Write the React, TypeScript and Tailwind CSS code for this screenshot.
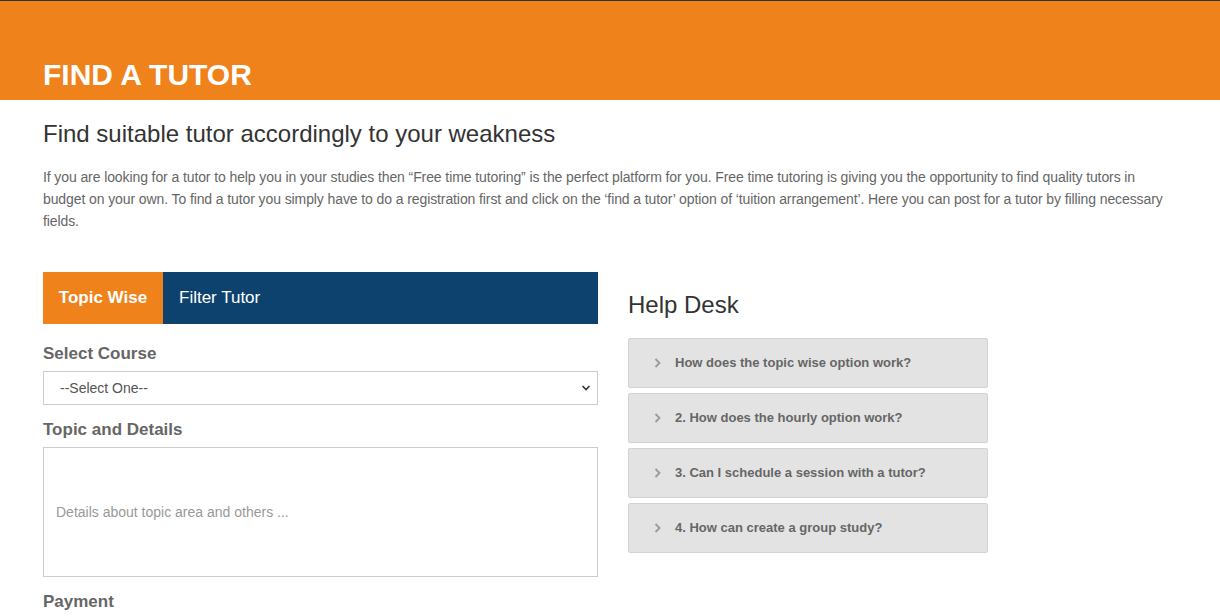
import React from 'react';

const faqs = [
  'How does the topic wise option work?',
  '2. How does the hourly option work?',
  '3. Can I schedule a session with a tutor?',
  '4. How can create a group study?',
];

const Chevron = () => (
  <svg width="9" height="12" viewBox="0 0 9 12" className="shrink-0">
    <path d="M2.5 2 L6.5 6 L2.5 10" fill="none" stroke="#9a9a9a" strokeWidth="1.8" />
  </svg>
);

export default function App() {
  return (
    <div className="min-h-[616px] bg-white font-['Liberation_Sans',Arial,sans-serif]">
      {/* Banner */}
      <div className="border-t border-[#333] bg-[#f0821c] h-[100px] flex items-end">
        <h1 className="px-[43px] pb-[10px] text-[30px] font-bold text-white leading-none">FIND A TUTOR</h1>
      </div>

      <div className="px-[43px]">
        <h2 className="mt-[20px] text-[24px] text-[#333] leading-[28px]">Find suitable tutor accordingly to your weakness</h2>
        <p className="mt-[18px] text-[14px] leading-[22px] text-[#666] tracking-[-0.1px]">
          If you are looking for a tutor to help you in your studies then “Free time tutoring” is the perfect platform for you. Free time tutoring is giving you the opportunity to find quality tutors in budget on your own. To find a tutor you simply have to do a registration first and click on the ‘find a tutor’ option of ‘tuition arrangement’. Here you can post for a tutor by filling necessary fields.
        </p>

        <div className="mt-[40px] flex gap-[30px]">
          {/* Left form */}
          <div className="w-[555px]">
            <div className="flex h-[52px] bg-[#0d426f]">
              <div className="w-[120px] bg-[#f0821c] flex items-center justify-center text-white font-bold text-[17px]">Topic Wise</div>
              <div className="flex items-center px-[16px] text-white text-[17px]">Filter Tutor</div>
            </div>

            <label className="block mt-[20px] text-[17px] font-bold text-[#666] leading-[20px]">Select Course</label>
            <div className="mt-[7px] h-[34px] border border-[#ccc] flex items-center justify-between pl-[16px] pr-[6px] text-[14px] text-[#555]">
              <span>--Select One--</span>
              <svg width="10" height="8" viewBox="0 0 10 8">
                <path d="M1.5 2 L5 5.5 L8.5 2" fill="none" stroke="#333" strokeWidth="1.6" />
              </svg>
            </div>

            <label className="block mt-[15px] text-[17px] font-bold text-[#666] leading-[20px]">Topic and Details</label>
            <div className="mt-[7px] h-[130px] border border-[#ccc] flex items-center px-[12px] text-[14px] text-[#999]">
              Details about topic area and others ...
            </div>

            <label className="block mt-[15px] text-[17px] font-bold text-[#666] leading-[20px]">Payment</label>
          </div>

          {/* Help desk */}
          <div className="w-[360px]">
            <h3 className="mt-[19px] text-[24px] text-[#333] leading-[28px]">Help Desk</h3>
            <div className="mt-[19px] flex flex-col gap-[5px]">
              {faqs.map((q) => (
                <div key={q} className="h-[50px] bg-[#e3e3e3] border border-[#d2d2d2] rounded-[2px] flex items-center gap-[13px] pl-[24px] text-[13px] font-bold text-[#666]">
                  <Chevron />
                  <span>{q}</span>
                </div>
              ))}
            </div>
          </div>
        </div>
      </div>
    </div>
  );
}
